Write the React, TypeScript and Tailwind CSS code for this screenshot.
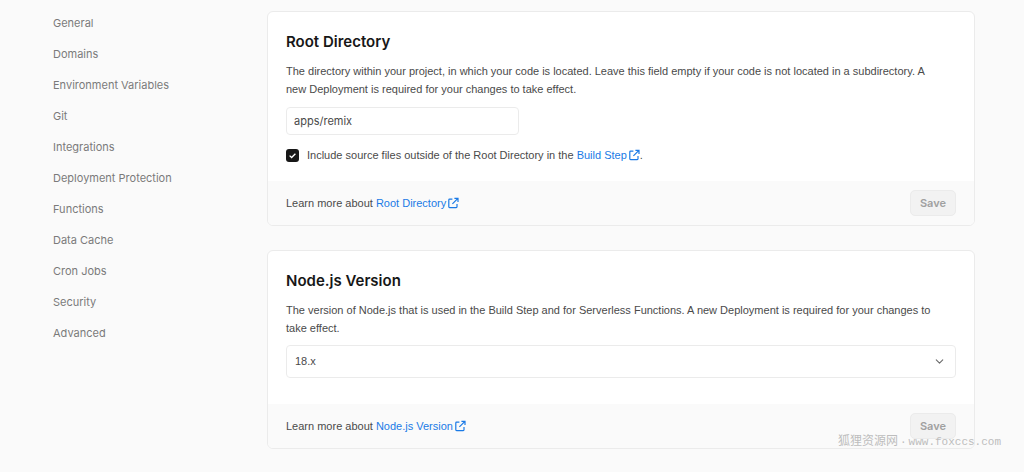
import React from "react";
import { ChevronDown } from "lucide-react";

const navItems = [
  "General",
  "Domains",
  "Environment Variables",
  "Git",
  "Integrations",
  "Deployment Protection",
  "Functions",
  "Data Cache",
  "Cron Jobs",
  "Security",
  "Advanced",
];

const ExternalIcon = () => (
  <svg viewBox="0 0 12 12" className="ml-px inline-block size-3 align-[-2px]" fill="none" stroke="currentColor" strokeWidth="1.2" aria-hidden="true">
    <path d="M5.4 2.2H2.6a.8.8 0 0 0-.8.8v6.8a.8.8 0 0 0 .8.8h6.6a.8.8 0 0 0 .8-.8V7" />
    <path d="M7.4 1.3h3.6v3.6M10.9 1.4 5.4 6.9" />
  </svg>
);

const DocLink: React.FC<{ label: string }> = ({ label }) => (
  <a href="#" className="text-[#1a7ae6]">
    {label}
    <ExternalIcon />
  </a>
);

interface SettingsCardProps {
  title: string;
  description: string;
  children: React.ReactNode;
}

const SettingsCard: React.FC<SettingsCardProps> = ({ title, description, children }) => (
  <section className="overflow-hidden rounded-md border border-[#ebebeb] bg-white">
    <div className="px-[18px] pt-[18px]">
      <h2 className="font-['Inter',sans-serif] text-[15px] leading-6 font-semibold text-[#171717]">{title}</h2>
      <p className="mt-2 pr-4 leading-[18px]">{description}</p>
      {children}
    </div>
    <footer className="flex h-11 items-center justify-between bg-[#fafafa] px-[18px]">
      <p>
        Learn more about <DocLink label={title} />
      </p>
      <button type="button" disabled className="h-[26px] rounded-[5px] border border-[#ebebeb] bg-[#f2f2f2] px-[9px] font-['Inter',sans-serif] font-semibold text-[#a0a0a0]">
        Save
      </button>
    </footer>
  </section>
);

const App: React.FC = () => {
  return (
    <div className="relative flex min-h-screen bg-[#fafafa] pr-[49px] pl-[53px] font-['Liberation_Sans',Arial,sans-serif] text-[11px] text-[#4a4a4a]">
      <nav className="w-[214px] shrink-0 pt-2 font-['Inter',sans-serif]">
        <ul>
          {navItems.map((item) => (
            <li key={item}>
              <a href="#" className="flex h-[31px] items-center text-[#7a7a7a]">
                {item}
              </a>
            </li>
          ))}
        </ul>
      </nav>

      <main className="flex min-w-0 flex-1 flex-col gap-6 pt-[11px] pb-[22px]">
        <SettingsCard
          title="Root Directory"
          description="The directory within your project, in which your code is located. Leave this field empty if your code is not located in a subdirectory. A new Deployment is required for your changes to take effect."
        >
          <input
            type="text"
            aria-label="Root Directory"
            defaultValue="apps/remix"
            className="mt-[9px] block h-7 w-[233px] rounded-[4px] border border-[#ebebeb] bg-white px-[7px] font-['Inter',sans-serif] outline-none"
          />
          <div className="flex h-[46px] items-center pb-[6px]">
            <span className="relative mr-2 flex size-[13px]">
              <input id="include-source" type="checkbox" defaultChecked className="size-[13px] appearance-none rounded-[3px] bg-[#171717]" />
              <svg viewBox="0 0 13 13" className="pointer-events-none absolute inset-0" fill="none" stroke="white" strokeWidth="1.3" aria-hidden="true">
                <path d="M3.6 6.6 5.6 8.5 9.4 4.7" />
              </svg>
            </span>
            <p>
              <label htmlFor="include-source">Include source files outside of the Root Directory in the</label> <DocLink label="Build Step" />.
            </p>
          </div>
        </SettingsCard>

        <SettingsCard
          title="Node.js Version"
          description="The version of Node.js that is used in the Build Step and for Serverless Functions. A new Deployment is required for your changes to take effect."
        >
          <div className="relative mt-2 mb-[26px]">
            <select
              aria-label="Node.js Version"
              defaultValue="18.x"
              className="block h-[33px] w-full appearance-none rounded-[4px] border border-[#ebebeb] bg-white px-2 outline-none"
            >
              <option>18.x</option>
              <option>16.x</option>
            </select>
            <ChevronDown className="pointer-events-none absolute top-[10px] right-[10px] size-[13px] text-[#6b6b6b]" />
          </div>
        </SettingsCard>
      </main>

      <div className="pointer-events-none absolute right-[23px] bottom-[22px] flex items-center gap-0.5 font-['Liberation_Mono','Noto_Sans_CJK_SC',monospace] leading-4 text-[#bdbdbd]">
        <span className="text-xs leading-4">狐狸资源网</span>
        <span>·</span>
        <span>www.foxccs.com</span>
      </div>
    </div>
  );
};

export default App;
